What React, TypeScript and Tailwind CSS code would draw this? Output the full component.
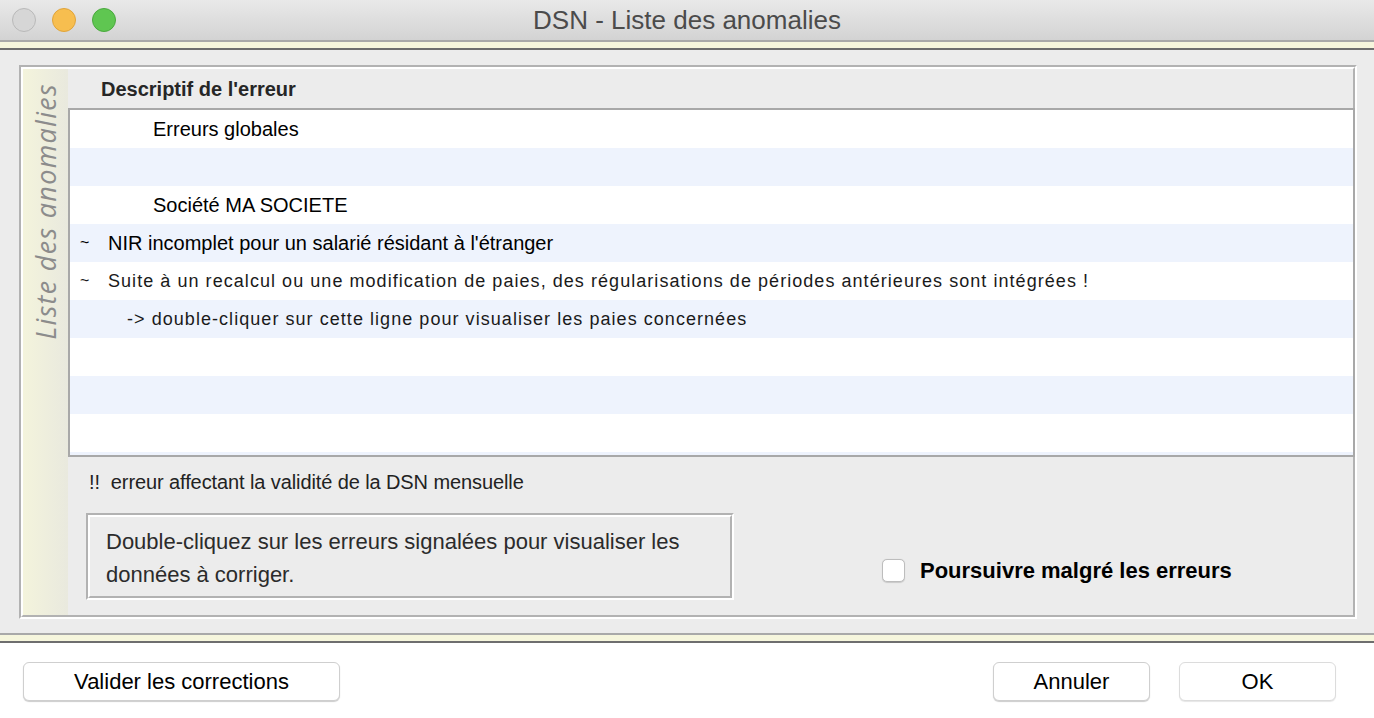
import React from 'react';

const rows: { text: string; pad: string; tilde?: boolean; small?: boolean }[] = [
  { text: 'Erreurs globales', pad: 'pl-[83px]' },
  { text: '', pad: '' },
  { text: 'Société MA SOCIETE', pad: 'pl-[83px]' },
  { text: 'NIR incomplet pour un salarié résidant à l\'étranger', pad: 'pl-[10px]', tilde: true },
  {
    text: 'Suite à un recalcul ou une modification de paies, des régularisations de périodes antérieures sont intégrées !',
    pad: 'pl-[10px]',
    tilde: true,
    small: true,
  },
  { text: '-> double-cliquer sur cette ligne pour visualiser les paies concernées', pad: 'pl-[57px]', small: true },
  { text: '', pad: '' },
  { text: '', pad: '' },
  { text: '', pad: '' },
];

function Separator() {
  return (
    <div className="flex flex-col">
      <div className="h-[2px] bg-[#a9a9a9]" />
      <div className="h-[6px] bg-[#f6f6dd]" />
      <div className="h-[2px] bg-[#6e6e6e]" />
    </div>
  );
}

export default function App() {
  return (
    <div
      className="w-[1374px] h-[718px] flex flex-col overflow-hidden bg-white"
      style={{ fontFamily: '"Liberation Sans", Arial, sans-serif' }}
    >
      {/* Barre de titre */}
      <div className="h-[40px] flex items-center relative bg-gradient-to-b from-[#e9e9e9] to-[#d3d3d3]">
        <div className="flex items-center gap-[16px] pl-[12px]">
          <div className="w-[24px] h-[24px] rounded-full bg-[#d6d6d6] border border-[#b9b9b9]" />
          <div className="w-[24px] h-[24px] rounded-full bg-[#f7be4f] border border-[#e0a43a]" />
          <div className="w-[24px] h-[24px] rounded-full bg-[#5fc651] border border-[#4aa93e]" />
        </div>
        <div className="absolute inset-0 flex items-center justify-center text-[26px] text-[#4b4b4b]">
          DSN - Liste des anomalies
        </div>
      </div>
      <Separator />

      {/* Zone principale */}
      <div className="flex-1 bg-[#ececec] pt-[15px] pb-[14px] pl-[19px] pr-[17px] flex flex-col">
        <div className="flex-1 flex border-2 border-t-[#b2b2b2] border-l-[#b2b2b2] border-r-white border-b-white">
          <div className="flex-1 flex border-2 border-t-white border-l-white border-r-[#b2b2b2] border-b-[#b2b2b2]">
            {/* Bandeau vertical */}
            <div className="w-[45px] flex flex-col items-center pt-[14px] bg-gradient-to-r from-[#f4f4dc] to-[#e9e9de]">
              <span
                className="[writing-mode:vertical-rl] rotate-180 italic text-[27px] leading-[30px] text-[#8c8c8c] tracking-[1.3px]"
                style={{ fontFamily: '"Open Sans", "Noto Sans", sans-serif' }}
              >
                Liste des anomalies
              </span>
            </div>

            <div className="flex-1 flex flex-col">
              <div className="h-[39px] flex items-center pl-[33px] text-[20px] font-bold text-[#262626]">
                Descriptif de l'erreur
              </div>

              <div className="border-t-2 border-l-2 border-b-2 border-[#a8a8a8] -mr-[2px] border-r-2">
                {rows.map((r, i) => (
                  <div
                    key={i}
                    className={`h-[38px] flex items-center ${r.pad} ${i % 2 === 1 ? 'bg-[#eef3fd]' : 'bg-white'} ${
                      r.small ? 'text-[18px] tracking-[1.05px] text-[#1a1a1a]' : 'text-[20px] text-black'
                    }`}
                  >
                    {r.tilde && <span className="w-[28px] text-[16px] tracking-normal">~</span>}
                    <span className="whitespace-nowrap">{r.text}</span>
                  </div>
                ))}
                <div className="h-[3px] bg-[#eef3fd]" />
              </div>

              <div className="pt-[10px] pl-[21px] text-[20px] text-[#222] tracking-[-0.1px]">
                !!&nbsp; erreur affectant la validité de la DSN mensuelle
              </div>

              <div className="flex items-start mt-[16px] pl-[18px]">
                <div className="w-[648px] h-[87px] border-2 border-t-[#b2b2b2] border-l-[#b2b2b2] border-r-white border-b-white">
                  <div className="h-full border-2 border-t-white border-l-white border-r-[#b2b2b2] border-b-[#b2b2b2] pl-[16px] pt-[8px] text-[22px] leading-[33px] text-[#2b2b2b]">
                    Double-cliquez sur les erreurs signalées pour visualiser les
                    <br />
                    données à corriger.
                  </div>
                </div>
                <label className="flex items-center ml-[148px] mt-[41px] gap-[15px]">
                  <span className="w-[23px] h-[23px] rounded-[5px] bg-white border border-[#bdbdbd] shadow-[0_0.5px_1px_rgba(0,0,0,0.15)]" />
                  <span className="text-[22px] font-bold text-black">Poursuivre malgré les erreurs</span>
                </label>
              </div>
            </div>
          </div>
        </div>
      </div>

      <Separator />

      {/* Boutons */}
      <div className="h-[75px] bg-white flex items-start pt-[19px] pl-[23px] pr-[38px]">
        <button className="w-[317px] h-[39px] rounded-[6px] bg-white border border-[#cfcfcf] shadow-[0_1px_1px_rgba(0,0,0,0.2)] text-[22px] text-black">
          Valider les corrections
        </button>
        <div className="flex-1" />
        <div className="flex gap-[29px]">
          <button className="w-[157px] h-[39px] rounded-[6px] bg-white border border-[#cfcfcf] shadow-[0_1px_1px_rgba(0,0,0,0.2)] text-[22px] text-black">
            Annuler
          </button>
          <button className="w-[157px] h-[39px] rounded-[6px] bg-white border border-[#dcdcdc] shadow-[0_1px_1px_rgba(0,0,0,0.1)] text-[22px] text-black">
            OK
          </button>
        </div>
      </div>
    </div>
  );
}
